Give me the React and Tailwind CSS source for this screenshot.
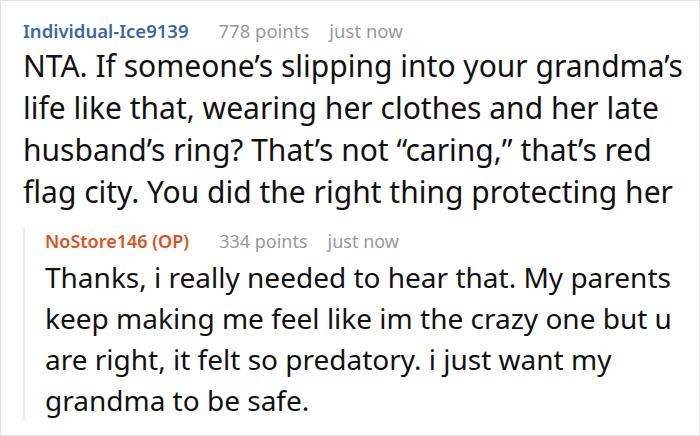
export default function App() {
  return (
    <div className="h-[436px] w-[700px] overflow-hidden bg-white" style={{ fontFamily: '"Noto Sans", "Open Sans", sans-serif' }}>
      <div className="h-full border border-[#e3e3e3] pl-[22px] pr-3 pt-[16px]">
        <div className="flex items-baseline text-[18.5px] leading-[28px]">
          <span className="font-semibold text-[#3a69a4]">Individual-Ice9139</span>
          <span className="ml-[30px] text-[#999]">778 points</span>
          <span className="ml-[20px] text-[#999]">just now</span>
        </div>
        <p className="mt-0 text-[30px] leading-[42px] text-[#111]">
          NTA. If someone’s slipping into your grandma’s life like that, wearing her clothes and her late husband’s ring? That’s not “caring,” that’s red flag city. You did the right thing protecting her
        </p>
        <div className="mt-[14px] border-l-2 border-[#ececec] pl-[20px]">
          <div className="flex items-baseline text-[18px] leading-[28px]">
            <span className="font-semibold text-[#d9531e]">NoStore146 (OP)</span>
            <span className="ml-[30px] text-[#999]">334 points</span>
            <span className="ml-[20px] text-[#999]">just now</span>
          </div>
          <p className="mt-[2px] text-[28px] leading-[41px] text-[#111]">
            Thanks, i really needed to hear that. My parents keep making me feel like im the crazy one but u are right, it felt so predatory. i just want my grandma to be safe.
          </p>
        </div>
      </div>
    </div>
  );
}
